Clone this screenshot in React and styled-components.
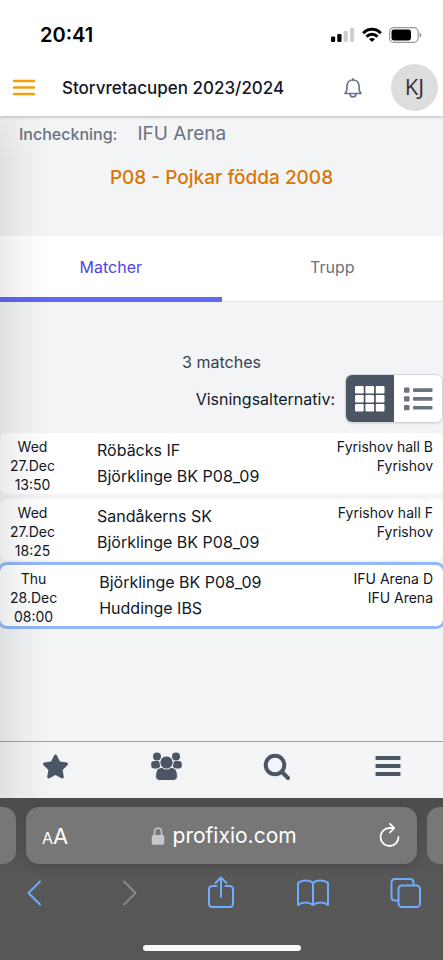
import React, { useState } from 'react';
import styled, { createGlobalStyle } from 'styled-components';
import { FaStar } from 'react-icons/fa';

const matches = [
    { id: 1, day: 'Wed', date: '27.Dec', time: '13:50', home: 'Röbäcks IF', away: 'Björklinge BK P08_09', court: 'Fyrishov hall B', venue: 'Fyrishov' },
    { id: 2, day: 'Wed', date: '27.Dec', time: '18:25', home: 'Sandåkerns SK', away: 'Björklinge BK P08_09', court: 'Fyrishov hall F', venue: 'Fyrishov' },
    { id: 3, day: 'Thu', date: '28.Dec', time: '08:00', home: 'Björklinge BK P08_09', away: 'Huddinge IBS', court: 'IFU Arena D', venue: 'IFU Arena' },
];

const App = () => {
    const [tab, setTab] = useState('matcher');
    const [view, setView] = useState('grid');
    const [selected, setSelected] = useState(3);

    return (
        <Screen>
            <GlobalStyle />
            <StatusBar>
                <Clock>20:41</Clock>
                <StatusIcons>
                    <SignalIcon />
                    <WifiIcon />
                    <BatteryIcon />
                </StatusIcons>
            </StatusBar>

            <Page>
                <Header>
                    <IconButton aria-label="Menu" $color="#f59e0b">
                        <svg width="24" height="18" viewBox="0 0 24 18" stroke="currentColor" strokeWidth="2.4" strokeLinecap="round">
                            <path d="M2 2H22M2 8.5H22M2 15H22" />
                        </svg>
                    </IconButton>
                    <Title>Storvretacupen 2023/2024</Title>
                    <IconButton aria-label="Notifications" $color="#64748b">
                        <BellIcon />
                    </IconButton>
                    <Avatar aria-label="Profile">KJ</Avatar>
                </Header>

                <Summary>
                    <CheckIn>
                        <CheckInLabel>Incheckning:</CheckInLabel>
                        <CheckInPlace>IFU Arena</CheckInPlace>
                    </CheckIn>
                    <ClassName>P08 - Pojkar födda 2008</ClassName>
                </Summary>

                <Tabs role="tablist">
                    <Tab role="tab" aria-selected={tab === 'matcher'} $active={tab === 'matcher'} onClick={() => setTab('matcher')}>
                        Matcher
                    </Tab>
                    <Tab role="tab" aria-selected={tab === 'trupp'} $active={tab === 'trupp'} onClick={() => setTab('trupp')}>
                        Trupp
                    </Tab>
                </Tabs>

                <Content>
                    <Count>3 matches</Count>
                    <ViewOptions>
                        <span id="view-label">Visningsalternativ:</span>
                        <Toggle role="group" aria-labelledby="view-label">
                            <ToggleButton aria-label="Grid" aria-pressed={view === 'grid'} $active={view === 'grid'} onClick={() => setView('grid')}>
                                <GridIcon />
                            </ToggleButton>
                            <ToggleButton aria-label="List" aria-pressed={view === 'list'} $active={view === 'list'} onClick={() => setView('list')}>
                                <ListIcon />
                            </ToggleButton>
                        </Toggle>
                    </ViewOptions>

                    <MatchList>
                        {matches.map((match) => (
                            <li key={match.id}>
                                <MatchCard $selected={selected === match.id} onClick={() => setSelected(match.id)}>
                                    <When>
                                        <span>{match.day}</span>
                                        <span>{match.date}</span>
                                        <span>{match.time}</span>
                                    </When>
                                    <Teams>
                                        <span>{match.home}</span>
                                        <span>{match.away}</span>
                                    </Teams>
                                    <Where>
                                        <span>{match.court}</span>
                                        <span>{match.venue}</span>
                                    </Where>
                                </MatchCard>
                            </li>
                        ))}
                    </MatchList>
                </Content>

                <BottomNav>
                    <NavButton aria-label="Favourites"><FaStar size={27} /></NavButton>
                    <NavButton aria-label="Teams"><GroupIcon /></NavButton>
                    <NavButton aria-label="Search"><SearchIcon /></NavButton>
                    <NavButton aria-label="More"><BarsIcon /></NavButton>
                </BottomNav>
            </Page>

            <Browser>
                <AddressRow>
                    <TabEdge $side="left" />
                    <AddressBar>
                        <TextSize aria-label="Text size"><small>A</small>A</TextSize>
                        <Address>
                            <LockIcon />
                            <AddressInput aria-label="Address" size="11" defaultValue="profixio.com" />
                        </Address>
                        <IconButton aria-label="Reload" $color="#ffffff"><ReloadIcon /></IconButton>
                    </AddressBar>
                    <TabEdge $side="right" />
                </AddressRow>
                <Toolbar>
                    <ToolButton aria-label="Back">
                        <ToolIcon><path d="M22 5.500L10.500 17L22 28.500" /></ToolIcon>
                    </ToolButton>
                    <ToolButton aria-label="Forward" disabled>
                        <ToolIcon><path d="M13 5.500L24.500 17L13 28.500" /></ToolIcon>
                    </ToolButton>
                    <ToolButton aria-label="Share">
                        <ToolIcon>
                            <path d="M12.500 10H8.500Q5 10 5 13.500V27.500Q5 31 8.500 31H25.500Q29 31 29 27.500V13.500Q29 10 25.500 10H21.500M17 21V1.500M11.500 7L17 1.500L22.500 7" />
                        </ToolIcon>
                    </ToolButton>
                    <ToolButton aria-label="Bookmarks">
                        <ToolIcon>
                            <path d="M17 7C14 3.500 6 3.500 2 7V29C6 25.500 13 25.500 17 29C21 25.500 28 25.500 32 29V7C28 3.500 20 3.500 17 7V29" />
                        </ToolIcon>
                    </ToolButton>
                    <ToolButton aria-label="Tabs">
                        <ToolIcon>
                            <rect x="9.500" y="9.500" width="21.500" height="21.500" rx="3.500" />
                            <path d="M9.500 24.500H6Q2.500 24.500 2.500 21V6.500Q2.500 3 6 3H21Q24.500 3 24.500 6.500V9.500" />
                        </ToolIcon>
                    </ToolButton>
                </Toolbar>
                <HomeIndicator />
            </Browser>
        </Screen>
    );
};

// Icons
const SignalIcon = () => (
    <svg width="24" height="16" viewBox="0 0 24 16">
        <rect x="0" y="9.5" width="4.200" height="5.500" rx="1.200" fill="#000" />
        <rect x="6.300" y="7" width="4.200" height="8" rx="1.200" fill="#000" />
        <rect x="12.600" y="4" width="4.200" height="11" rx="1.200" fill="#cfcfcf" />
        <rect x="19" y="0.800" width="4.200" height="14.200" rx="1.200" fill="#cfcfcf" />
    </svg>
);

const WifiIcon = () => (
    <svg width="20" height="16" viewBox="0 0 20 16" fill="none" stroke="#000" strokeWidth="2.900">
        <path d="M1.200 6.200C6 1 14 1 18.800 6.200" />
        <path d="M4.500 9.600C7.700 6.400 12.300 6.400 15.500 9.600" />
        <path d="M7 11.900Q10 9.900 13 11.900L10 15Z" fill="#000" stroke="none" />
    </svg>
);

const BatteryIcon = () => (
    <svg width="33" height="16" viewBox="0 0 33 16">
        <rect x="0.600" y="0.600" width="28.500" height="14.800" rx="4.200" fill="none" stroke="#999" strokeWidth="1.200" />
        <rect x="2.500" y="2.500" width="19.500" height="11" rx="2.400" fill="#000" />
        <path d="M30.500 5.500Q32.500 6.300 32.500 8T30.500 10.500Z" fill="#999" />
    </svg>
);

const BellIcon = () => (
    <svg width="24" height="24" viewBox="0 0 24 24" fill="none" stroke="currentColor" strokeWidth="1.700" strokeLinecap="round" strokeLinejoin="round">
        <path d="M4 17.500H20C18.200 15.900 18 14.500 18 10C18 6.300 15.500 4 12 4S6 6.300 6 10C6 14.500 5.800 15.900 4 17.500Z" />
        <path d="M12 3.800V2.800M9 17.500C9 22 15 22 15 17.500" />
    </svg>
);

const GridIcon = () => (
    <svg width="30" height="26" viewBox="0 0 30 26" fill="#fff">
        {[0, 9, 18].map((y) => [0, 10.4, 20.8].map((x) => (
            <rect key={`${x}-${y}`} x={x} y={y} width="8.700" height="7.500" rx="1.200" />
        )))}
    </svg>
);

const ListIcon = () => (
    <svg width="30" height="24" viewBox="0 0 30 24" fill="currentColor">
        {[0.5, 9.3, 18.1].map((y) => (
            <g key={y}>
                <rect x="1" y={y} width="5.500" height="5.200" rx="1" />
                <rect x="10" y={y + 0.8} width="19.500" height="3.600" rx="1" />
            </g>
        ))}
    </svg>
);

const GroupIcon = () => (
    <svg width="31" height="29" viewBox="0 0 31 29" fill="currentColor">
        <circle cx="6" cy="4.500" r="4" />
        <circle cx="25" cy="4.500" r="4" />
        <rect x="0.200" y="9" width="9" height="7.500" rx="3" />
        <rect x="21.800" y="9" width="9" height="7.500" rx="3" />
        <path d="M10 15.500H21Q26.500 16 26.500 24.500Q26.500 28.500 22.500 28.500H8.500Q4.500 28.500 4.500 24.500Q4.500 16 10 15.500Z" stroke="#f3f4f6" />
        <circle cx="15.500" cy="10.500" r="6.600" stroke="#f3f4f6" />
    </svg>
);

const SearchIcon = () => (
    <svg width="28" height="28" viewBox="0 0 28 28" fill="none" stroke="currentColor" strokeWidth="4" strokeLinecap="round">
        <circle cx="12" cy="12" r="9.300" />
        <path d="M19 19L25 25" />
    </svg>
);

const BarsIcon = () => (
    <svg width="26" height="22" viewBox="0 0 26 22" fill="currentColor">
        <rect x="0.500" y="0" width="25" height="4" rx="0.800" />
        <rect x="0.500" y="8" width="25" height="4" rx="0.800" />
        <rect x="0.500" y="16" width="25" height="4" rx="0.800" />
    </svg>
);

const LockIcon = () => (
    <svg width="14" height="18" viewBox="0 0 14 18" fill="none">
        <path d="M3.500 9V5Q3.500 1.200 7 1.200T10.500 5V9" stroke="#c7c6ce" strokeWidth="1.600" />
        <rect x="0.700" y="8" width="12.600" height="9.700" rx="1.800" fill="#c7c6ce" />
    </svg>
);

const ReloadIcon = () => (
    <svg width="22" height="26" viewBox="0 0 22 26" fill="none" stroke="currentColor" strokeWidth="1.800" strokeLinecap="round" strokeLinejoin="round">
        <path d="M19.500 14A9 9 0 1 1 10.500 5H14.500M11 0.900L15.200 5.100L11 9.300" />
    </svg>
);

const ToolIcon = ({ children }) => (
    <svg width="34" height="34" viewBox="0 0 34 34" fill="none" stroke="currentColor" strokeWidth="2" strokeLinecap="round" strokeLinejoin="round">
        {children}
    </svg>
);

// Styled Components
const GlobalStyle = createGlobalStyle`
    *, *::before, *::after {
        box-sizing: border-box;
    }

    body {
        margin: 0;
        background: #f3f4f6;
        color: #111827;
        font-family: Inter, "Liberation Sans", sans-serif;
        font-size: 16px;
    }

    button, input {
        margin: 0;
        padding: 0;
        border: 0;
        background: none;
        color: inherit;
        font: inherit;
    }

    button {
        cursor: pointer;
    }

    svg {
        display: block;
        flex-shrink: 0;
    }
`;

const Screen = styled.div`
    display: flex;
    flex-direction: column;
    min-height: 100vh;
`;

const StatusBar = styled.div`
    position: relative;
    display: flex;
    align-items: center;
    justify-content: space-between;
    height: 59px;
    padding: 11px 21px 0 40px;
    background: #ffffff;
    z-index: 2;
`;

const Clock = styled.time`
    color: #000000;
    font-size: 20px;
    font-weight: 600;
`;

const StatusIcons = styled.div`
    display: flex;
    align-items: center;
    gap: 7px;
`;

const Page = styled.div`
    position: relative;
    display: flex;
    flex: 1;
    flex-direction: column;

    &::after {
        content: '';
        position: absolute;
        top: 0;
        bottom: 0;
        left: 0;
        width: 48px;
        background: linear-gradient(90deg, rgba(0, 0, 0, 0.08), rgba(0, 0, 0, 0.03) 50%, transparent);
        mask-image: linear-gradient(transparent, #000 100px);
        pointer-events: none;
    }
`;

const Header = styled.header`
    display: flex;
    align-items: center;
    height: 57px;
    padding: 0 5px 0 12px;
    background: #ffffff;
    box-shadow: 0 1px 3px rgba(0, 0, 0, 0.25);
    z-index: 1;
`;

const IconButton = styled.button`
    display: flex;
    color: ${props => props.$color};
`;

const Title = styled.h1`
    flex: 1;
    margin: 0 0 0 26px;
    font-size: 17px;
    font-weight: 500;
`;

const Avatar = styled.button`
    width: 47px;
    height: 47px;
    margin-left: 26px;
    padding-bottom: 3px;
    border-radius: 50%;
    background: #dddddd;
    color: #333333;
    font-family: "Open Sans", sans-serif;
    font-size: 22px;
`;

const Summary = styled.section`
    padding: 4px 19px 44px;
    line-height: 28px;
`;

const CheckIn = styled.div`
    display: flex;
    gap: 20px;
    color: #6b7280;
`;

const CheckInLabel = styled.span`
    font-size: 16px;
    font-weight: 500;
`;

const CheckInPlace = styled.span`
    font-size: 19px;
`;

const ClassName = styled.h2`
    margin: 16px 0 0;
    color: #d97706;
    font-size: 19px;
    font-weight: 500;
    text-align: center;
`;

const Tabs = styled.div`
    display: flex;
    background: #ffffff;
`;

const Tab = styled.button`
    flex: 1;
    height: 66px;
    padding-bottom: ${props => (props.$active ? '0' : '4px')};
    border-bottom: ${props => (props.$active ? '5px solid #6366f1' : '1px solid #e5e7eb')};
    color: ${props => (props.$active ? '#4f46e5' : '#6b7280')};
    font-size: 16px;
`;

const Content = styled.main`
    flex: 1;
    padding: 48px 0 24px;
`;

const Count = styled.div`
    color: #374151;
    font-size: 16px;
    line-height: 24px;
    text-align: center;
`;

const ViewOptions = styled.div`
    display: flex;
    align-items: center;
    justify-content: flex-end;
    gap: 10px;
    font-size: 16px;
`;

const Toggle = styled.div`
    display: flex;
    overflow: hidden;
    border: 1px solid #d1d5db;
    border-radius: 7px;
    box-shadow: 0 1px 2px rgba(0, 0, 0, 0.1);
`;

const ToggleButton = styled.button`
    display: flex;
    align-items: center;
    justify-content: center;
    width: 48px;
    height: 47px;
    background: ${props => (props.$active ? '#4b5563' : '#ffffff')};
    color: #6b7280;
`;

const MatchList = styled.ul`
    display: flex;
    flex-direction: column;
    gap: 5px;
    margin: 10px 0 0;
    padding: 0;
    list-style: none;
`;

const MatchCard = styled.button`
    display: flex;
    align-items: flex-start;
    width: 100%;
    padding: 4px 10px 0;
    border-radius: 7px;
    background: #ffffff;
    box-shadow: ${props => (props.$selected ? '0 0 0 3px #93b7f5' : 'none')};
    color: #111827;
    font-size: 14px;
    line-height: 19px;
`;

const When = styled.span`
    display: flex;
    flex-direction: column;
    align-items: center;
`;

const Teams = styled.span`
    display: flex;
    flex: 1;
    flex-direction: column;
    align-items: flex-start;
    margin-left: 42px;
    font-size: 16px;
    line-height: 26px;
`;

const Where = styled.span`
    display: flex;
    flex-direction: column;
    align-items: flex-end;
`;

const BottomNav = styled.nav`
    display: grid;
    grid-template-columns: repeat(4, 1fr);
    height: 57px;
    padding-bottom: 7px;
    border-top: 1px solid #94a3b0;
`;

const NavButton = styled.button`
    display: flex;
    align-items: center;
    justify-content: center;
    color: #4b5563;
`;

const Browser = styled.footer`
    display: flex;
    flex-direction: column;
    padding: 9px 0;
    background: linear-gradient(#4c4c4c, #575757 80px);
    color: #ffffff;
`;

const AddressRow = styled.div`
    display: flex;
    gap: 10px;
    height: 57px;
`;

const TabEdge = styled.div`
    width: 16px;
    border-radius: ${props => (props.$side === 'left' ? '0 13px 13px 0' : '13px 0 0 13px')};
    background: #777777;
`;

const AddressBar = styled.div`
    display: flex;
    flex: 1;
    align-items: center;
    padding: 0 16px;
    border-radius: 13px;
    background: #777777;
    box-shadow: 0 2px 8px rgba(0, 0, 0, 0.12);
`;

const TextSize = styled.button`
    font-size: 22px;

    small {
        font-size: 16px;
    }
`;

const Address = styled.div`
    display: flex;
    flex: 1;
    align-items: center;
    justify-content: center;
    gap: 8px;
`;

const AddressInput = styled.input`
    field-sizing: content;
    font-size: 21px;
    outline: none;
`;

const Toolbar = styled.div`
    display: flex;
    justify-content: space-between;
    padding: 12px 20px 0 18px;
`;

const ToolButton = styled.button`
    color: #6dacff;

    &:disabled {
        color: #8a8a8a;
        cursor: default;
    }
`;

const HomeIndicator = styled.div`
    align-self: center;
    width: 158px;
    height: 6px;
    margin-top: 35px;
    border-radius: 3px;
    background: #f8f8f8;
`;

export default App;
